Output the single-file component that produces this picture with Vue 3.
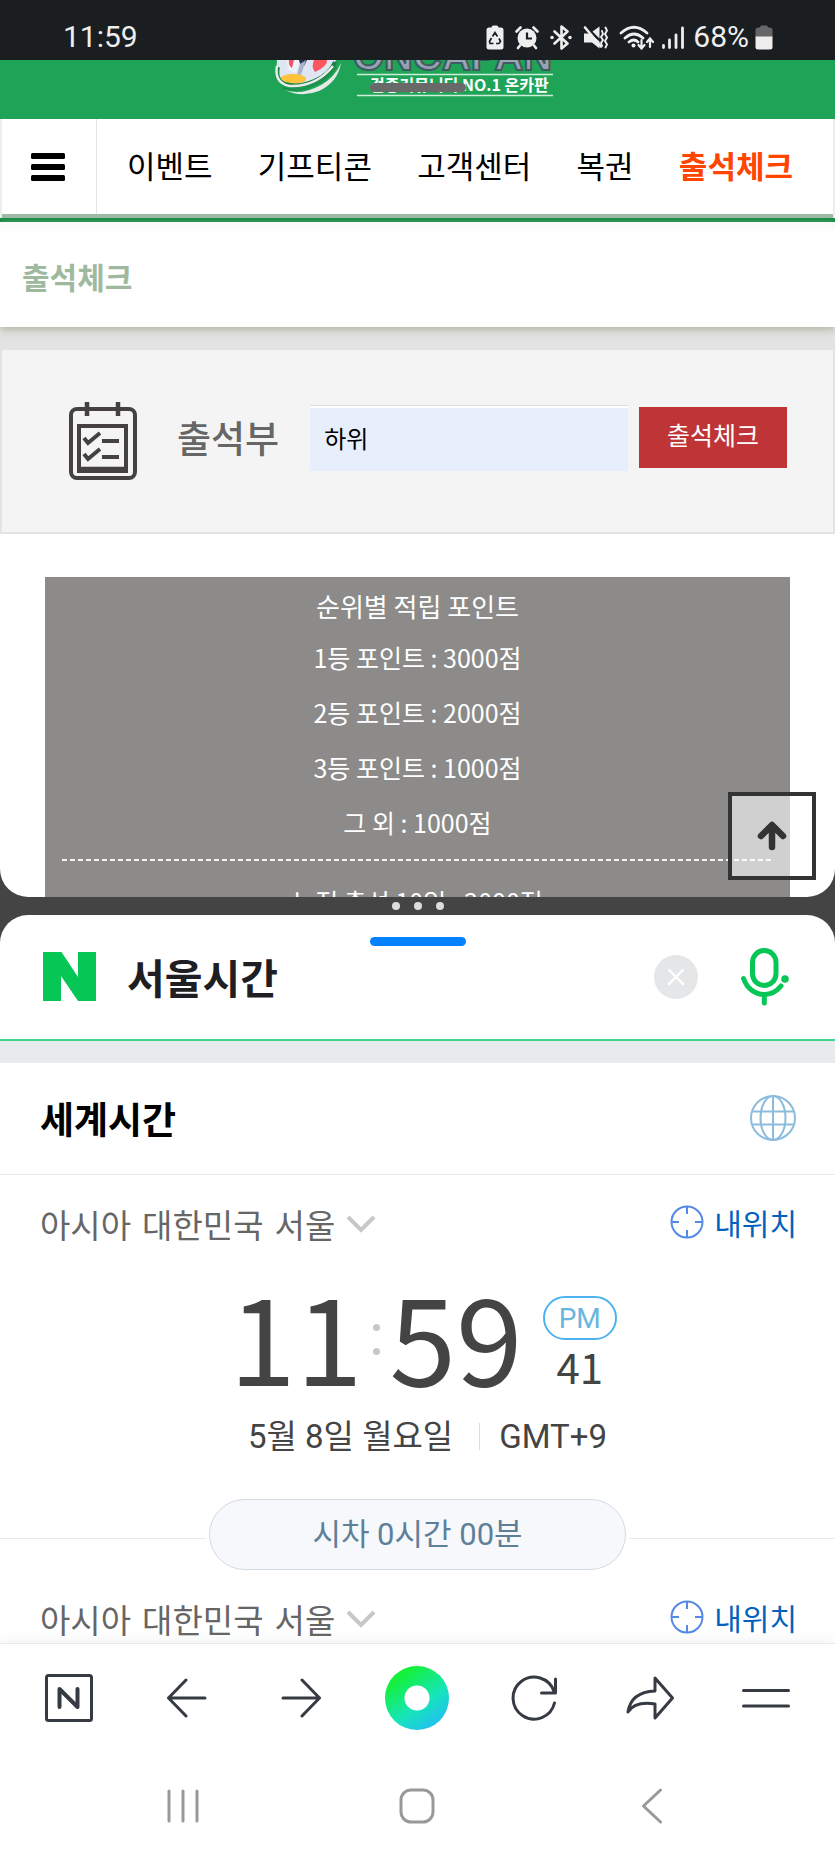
<script setup>
import { ref } from 'vue'

const menu = ['이벤트', '기프티콘', '고객센터', '복권', '출석체크']
const active = '출석체크'
const greeting = ref('하위')
const query = ref('서울시간')
const ranks = ['1등 포인트 : 3000점', '2등 포인트 : 2000점', '3등 포인트 : 1000점', '그 외 : 1000점']
const bonus = '누적 출석 10일 : 2000점'
const place = ['아시아', '대한민국', '서울']
</script>

<template>
  <div class="device">
    <header class="status">
      <span class="status-time">11:59</span>
      <div class="status-icons">
        <svg width="18" height="25" viewBox="0 0 18 25">
          <path d="M5.500 2.500q0-2 2-2h3q2 0 2 2h2.500q2.500 0 2.500 2.500v17q0 2.500-2.500 2.500h-12q-2.500 0-2.500-2.500v-17q0-2.500 2.500-2.500z" fill="#eee" />
          <path d="M6.500 11.500l2.500-4 2.500 4M13 13.500l1.500 3-1.500 2h-3M7.500 18.500h-3.500l-.5-2 2-3.500" fill="none" stroke="#1a1e21" stroke-width="1.700" />
        </svg>
        <svg width="24" height="25" viewBox="0 0 24 25">
          <circle cx="12" cy="13" r="9.500" fill="#eee" />
          <path d="M1.500 6.500l4-4M22.500 6.500l-4-4M5 20.500l-2 2.500M19 20.500l2 2.500" stroke="#eee" stroke-width="2.600" stroke-linecap="round" />
          <path d="M12 7.500v6h5" fill="none" stroke="#1a1e21" stroke-width="2.200" />
        </svg>
        <svg width="22" height="25" viewBox="0 0 22 25">
          <path d="M4.500 6.500l13 12-6 5v-22l6 5-13 12" fill="none" stroke="#eee" stroke-width="2.600" stroke-linejoin="round" stroke-linecap="round" />
          <circle cx="2" cy="12.500" r="1.800" fill="#eee" /><circle cx="20" cy="12.500" r="1.800" fill="#eee" />
        </svg>
        <svg width="25" height="25" viewBox="0 0 25 25">
          <path d="M1 8.500h6l9.500 8v7l-7.500-6h-8zM9.500 6.500l7-5v12z" fill="#eee" />
          <path d="M2 2.500l16 19" stroke="#eee" stroke-width="2.600" stroke-linecap="round" />
          <path d="M19 6l1 3-2 3 2 3-2 3 1 3M22.500 2.500l1.500 3-2 3.500 2 3.500-2 3.500 2 3.500-1.500 3" fill="none" stroke="#eee" stroke-width="1.900" stroke-linecap="round" />
        </svg>
        <div class="levels">
          <svg width="36" height="25" viewBox="0 0 36 25">
            <g fill="none" stroke="#eee" stroke-width="2.700" stroke-linecap="round">
              <path d="M2 8q13-11.500 26 0M6 13q9-8 18 0M10 17q5-4 9 0" />
              <path d="M22.500 15v8M19.500 20l3 3.500 3-3.500M31 22v-8M28 17l3-3.500 3 3.500" stroke-width="2.200" />
            </g>
            <circle cx="14.500" cy="20.500" r="2" fill="#eee" />
          </svg>
          <svg width="22" height="25" viewBox="0 0 22 25">
            <path d="M1.500 20.500v2M7.500 15v7.500M14 10v12.500M20.500 3v19.500" stroke="#eee" stroke-width="2.800" stroke-linecap="round" />
          </svg>
          <span class="charge">68%
            <svg width="18" height="25" viewBox="0 0 18 25">
              <path d="M.500 12v-7q0-2.500 3-2.500h1.500q0-2 2-2h4q2 0 2 2h1.500q3 0 3 2.500v7z" fill="#666" />
              <path d="M.500 11.500h17v10.500q0 2.500-2.500 2.500h-12q-2.500 0-2.500-2.500z" fill="#eee" />
            </svg>
          </span>
        </div>
      </div>
    </header>

    <main class="pane site">
      <div class="brand">
        <svg width="289" height="59" viewBox="0 0 289 59" role="img" aria-label="ONCAPAN">
          <defs>
            <linearGradient id="steel" x1="0" y1="0" x2="0" y2="1">
              <stop offset="0" stop-color="#b9c3cf" /><stop offset="1" stop-color="#8896a6" />
            </linearGradient>
          </defs>
          <path d="M4 0h59q-8 20-34 26-24 2-26-11z" fill="#dfe5f2" />
          <path d="M14 0h13l-4 13-8-3z" fill="#eef1f8" />
          <path d="M16 0h5l-2 8q-4-3-3-8z" fill="#ee5563" />
          <path d="M26 0h8l-3 6q-4 0-5-6z" fill="#26324f" />
          <path d="M33 0l-5 15h-4l3-11z" fill="#a9b4cc" />
          <path d="M41 0h13q1 6-12 12-4-5-1-12z" fill="#fb5560" />
          <ellipse cx="20" cy="19" rx="13" ry="5" fill="#fdc33d" />
          <path d="M5 7q-3 13 7 17 17 5 37-7 9-6 13-15" fill="none" stroke="#1c7f48" stroke-width="4" />
          <path d="M4 6q-3 17 13 20 26 1 43-20" fill="none" stroke="#e9ece9" stroke-width="2.500" />
          <path d="M12 30q16 6 36-5 14-8 20-22-3 19-22 28-18 7-34-1z" fill="#e6e9e6" />
          <path d="M10 28q18 5 37-6 10-6 16-15" fill="none" stroke="#1c8f4d" stroke-width="2" />
          <text x="80" y="10" class="logo-name">ONCAPAN</text>
          <path d="M84 14.500h196M84 35.500h196" stroke="#cfeeda" stroke-width="1.300" />
          <text x="97" y="31" class="logo-sub">검증커뮤니티 NO.1 온카판</text>
        </svg>
      </div>
      <nav class="menu">
        <button class="burger" type="button" aria-label="메뉴">
          <svg width="34" height="28" viewBox="0 0 34 28">
            <rect width="34" height="6" rx="1.500" /><rect y="11" width="34" height="6" rx="1.500" /><rect y="22" width="34" height="6" rx="1.500" />
          </svg>
        </button>
        <div class="links">
          <a v-for="m in menu" :key="m" href="#" :class="{ active: m === active }">{{ m }}</a>
        </div>
      </nav>
      <h1 class="page-title">출석체크</h1>
      <form class="attend" @submit.prevent>
        <svg width="68" height="80" viewBox="0 0 68 80" fill="none" stroke="#454143">
          <rect x="2" y="8" width="64" height="69" rx="6" stroke-width="4" />
          <rect x="10" y="25" width="47" height="45" stroke-width="4" />
          <path d="M10 68h47M18 1v14M49 1v14" stroke-width="4.500" />
          <path d="M15 37l4 5 12-10M33 40h17M15 53l4 5 12-10M33 56h17" stroke-width="4" />
        </svg>
        <label for="greeting">출석부</label>
        <input id="greeting" v-model="greeting" type="text">
        <button type="submit">출석체크</button>
      </form>
      <section class="points">
        <h2>순위별 적립 포인트</h2>
        <p v-for="r in ranks" :key="r">{{ r }}</p>
        <div class="dash"></div>
        <p>{{ bonus }}</p>
      </section>
      <button class="to-top" type="button" aria-label="위로">
        <svg width="30" height="30" viewBox="0 0 30 30">
          <path d="M15 26v-20M4 15l11-11 11 11" fill="none" stroke="#333" stroke-width="6.500" stroke-linecap="round" stroke-linejoin="round" />
        </svg>
      </button>
      <span class="grip"></span>
    </main>

    <div class="divider"><i></i><i></i><i></i></div>

    <section class="pane naver">
      <div class="results">
        <form class="search" @submit.prevent>
          <svg width="53" height="49" viewBox="0 0 53 49" role="img" aria-label="NAVER">
            <path d="M0 0h18.500l16.500 25v-25h18v49h-18l-17-25v25h-18z" fill="#06c755" />
          </svg>
          <input v-model="query" type="text" aria-label="검색어">
          <button type="button" aria-label="지우기">
            <svg width="44" height="44" viewBox="0 0 44 44">
              <circle cx="22" cy="22" r="22" fill="#e5e6e8" />
              <path d="M15 15l14 14M29 15l-14 14" stroke="#fff" stroke-width="2.400" stroke-linecap="round" />
            </svg>
          </button>
          <button type="button" aria-label="음성 검색">
            <svg width="48" height="58" viewBox="0 0 48 58" fill="none" stroke="#06c755" stroke-width="5" stroke-linecap="round">
              <rect x="11.500" y="2.500" width="23.500" height="35" rx="11.700" />
              <path d="M2.500 30.500c3.500 10 11.500 16 21 16 6.500 0 12-3 16.500-8.500M23.300 47v8" />
              <circle cx="44" cy="31" r="3.800" fill="#06c755" stroke="none" />
            </svg>
          </button>
        </form>
        <div class="section-head">
          <h2>세계시간</h2>
          <svg width="46" height="46" viewBox="0 0 46 46" fill="none" stroke="#8dbbdd" stroke-width="2">
            <circle cx="23" cy="23" r="22" /><ellipse cx="23" cy="23" rx="12.500" ry="22" />
            <path d="M23 1v44M3 16.500h40M3 29.500h40" />
          </svg>
        </div>
        <template v-for="n in 2" :key="n">
          <div class="place">
            <button class="city" type="button">
              <span v-for="p in place" :key="p">{{ p }}</span>
              <svg width="30" height="18" viewBox="0 0 30 18"><path d="M2 2l13 13 13-13" fill="none" stroke="#c5c7c9" stroke-width="4" /></svg>
            </button>
            <a class="mine" href="#">
              <svg width="34" height="34" viewBox="0 0 34 34" fill="none" stroke="#5489e6" stroke-width="2">
                <circle cx="17" cy="17" r="15.500" /><path d="M17 1v8M17 25v8M1 17h8M25 17h8" />
              </svg>내위치</a>
          </div>
          <template v-if="n === 1">
            <div class="clock">
              <span>11</span><span class="colon"><i></i><i></i></span><span>59</span>
              <div class="side"><b>PM</b><em>41</em></div>
            </div>
            <div class="date"><span>5월 8일 월요일</span><i></i><span>GMT+9</span></div>
            <div class="offset"><span>시차 0시간 00분</span></div>
          </template>
        </template>
      </div>

      <nav class="toolbar">
        <button type="button" aria-label="홈">
          <svg width="48" height="48" viewBox="0 0 48 48" stroke-width="3"><rect x="1.500" y="1.500" width="45" height="45" rx="2" /><path d="M14.500 33v-18l18 18v-18" stroke-width="4" /></svg>
        </button>
        <button type="button" aria-label="뒤로">
          <svg width="44" height="40" viewBox="-4 0 44 40" stroke-width="3"><path d="M38 20h-36M19 2l-17.500 18 17.500 18" /></svg>
        </button>
        <button type="button" aria-label="앞으로">
          <svg width="40" height="40" viewBox="0 0 40 40" stroke-width="3"><path d="M2 20h36M21 2l17.500 18-17.500 18" /></svg>
        </button>
        <button type="button" aria-label="그린닷"><span class="dot"></span></button>
        <button type="button" aria-label="새로고침">
          <svg width="46" height="46" viewBox="0 0 46 46" stroke-width="3"><path d="M43.500 28a21 21 0 1 1-.5-11.500M44.500 4v14h-14" /></svg>
        </button>
        <button type="button" aria-label="공유">
          <svg width="48" height="46" viewBox="0 0 48 46" stroke-width="3"><path d="M29 3l17.500 20-17.500 20v-14q-20-3-27 8 3-20 27-21z" /></svg>
        </button>
        <button type="button" aria-label="더보기">
          <svg width="48" height="20" viewBox="0 0 48 20" stroke-width="3"><path d="M1.500 2.500h45M1.500 18h45" /></svg>
        </button>
      </nav>
      <nav class="system">
        <button type="button" aria-label="최근 앱">
          <svg width="32" height="34" viewBox="0 0 32 34"><path d="M2 2v30M16 2v30M30 2v30" /></svg>
        </button>
        <button type="button" aria-label="홈 화면">
          <svg width="36" height="36" viewBox="0 0 36 36"><rect x="2" y="2" width="32" height="32" rx="10" /></svg>
        </button>
        <button type="button" aria-label="이전">
          <svg width="22" height="36" viewBox="0 0 22 36"><path d="M19.500 2l-17 16 17 16" /></svg>
        </button>
      </nav>
      <span class="grip blue"></span>
    </section>
  </div>
</template>

<style>
body { margin: 0; background: #444; }
</style>

<style scoped>
.device {
  display: flex;
  flex-direction: column;
  height: 100vh;
  background: #444;
  font-family: "Noto Sans CJK KR", "Noto Sans", sans-serif;
  color: #000;
}
* { box-sizing: border-box; }
svg { display: block; flex: none; }
h1, h2, p { margin: 0; }
a { color: inherit; text-decoration: none; }
button { border: 0; padding: 0; background: none; font: inherit; color: inherit; }
input { font: inherit; color: inherit; border: 0; outline: 0; min-width: 0; }

.status {
  flex: none;
  display: flex;
  justify-content: space-between;
  align-items: center;
  height: 60px;
  padding: 14px 62px 0 63px;
  background: #1a1e21;
  color: #eee;
  font: 30px/44px Roboto, sans-serif;
}
.status-icons { display: flex; align-items: center; gap: 11px; }
.levels { display: flex; align-items: center; gap: 7px; }
.charge { display: flex; align-items: center; gap: 6px; margin-left: 2px; }

.pane { position: relative; overflow: hidden; min-height: 0; background: #fff; }
.site { flex: 8 1 0; border-radius: 0 0 28px 28px; }
.naver { flex: 9 1 0; display: flex; flex-direction: column; border-radius: 28px 28px 0 0; }

.brand { display: flex; justify-content: center; background: #1fa357; }
.logo-name { font: bold 40px "Liberation Sans", sans-serif; fill: url(#steel); stroke: #3f5a60; stroke-width: 2px; }
.logo-sub { font: bold 16px "Noto Sans CJK KR", sans-serif; fill: #fff; }
.grip {
  position: absolute;
  top: 23px;
  left: 50%;
  width: 96px;
  height: 9px;
  margin-left: -48px;
  border-radius: 5px;
  background: #696969;
}
.grip.blue { top: 22px; background: #0381fe; }

.menu {
  display: flex;
  height: 103px;
  border: solid #128a43;
  border-width: 0 0 4px;
  box-shadow: inset 2px 0 #eee, inset -2px 0 #eee, inset 0 -4px #9fb9a8;
}
.burger {
  display: flex;
  align-items: center;
  justify-content: center;
  width: 97px;
  margin-bottom: 4px;
  border-right: 1px solid #e4e4e4;
}
.links {
  flex: 1;
  display: flex;
  justify-content: space-between;
  align-items: center;
  padding: 0 42px 8px 30px;
  font-size: 31px;
}
.links .active { color: #ff4500; font-weight: bold; }

.page-title {
  position: relative;
  height: 105px;
  padding-left: 22px;
  background: linear-gradient(#f8f8f8, #fff 12px);
  box-shadow: 0 3px 8px #b4b4a4;
  color: #9fb99f;
  font-size: 30px;
  line-height: 108px;
}
.attend {
  display: flex;
  align-items: center;
  height: 207px;
  padding: 0 46px 0 67px;
  border: solid #e3e3e3;
  border-width: 23px 2px 2px;
  background: #f4f4f4;
}
.attend label {
  margin: 0 31px 8px 40px;
  color: #666;
  font-size: 37px;
  font-weight: 500;
}
.attend input {
  flex: 1;
  height: 66px;
  margin: 0 11px 6px 0;
  padding: 0 14px 2px;
  border-top: 1px solid #ddd;
  background: linear-gradient(#fff 2px, #e7effd 2px);
  font-size: 24px;
}
.attend button {
  width: 148px;
  height: 61px;
  margin-bottom: 8px;
  padding-bottom: 6px;
  background: #bf3537;
  color: #fff;
  font-size: 25px;
}
.points {
  margin: 43px 45px 0;
  padding: 9px 17px 0;
  background: #8c8b89;
  color: #fff;
  font-size: 25px;
  line-height: 55px;
  text-align: center;
}
.points h2 { margin-bottom: 4px; font-size: 26px; font-weight: 400; line-height: 40px; }
.dash {
  height: 2px;
  margin: 9px 0 13px;
  background: repeating-linear-gradient(90deg, #f4f4f4 0 5px, transparent 5px 8px);
}
.to-top {
  position: absolute;
  right: 19px;
  bottom: 17px;
  display: flex;
  align-items: center;
  justify-content: center;
  width: 88px;
  height: 88px;
  border: 4px solid #333;
  background: rgba(255, 255, 255, .6);
}

.divider { flex: none; display: flex; align-items: center; justify-content: center; gap: 14px; height: 18px; }
.divider i { width: 8px; height: 8px; border-radius: 50%; background: #ddd; }

.results { flex: 1; min-height: 0; overflow: hidden; }
.search {
  display: flex;
  align-items: center;
  height: 126px;
  padding: 0 46px 0 43px;
  border-bottom: 2px solid #42d48b;
}
.search input { flex: 1; margin: 0 31px; padding: 0 0 2px; color: #1e1e23; font-size: 41px; font-weight: bold; }
.search button + button { margin-left: 43px; }
.section-head {
  display: flex;
  align-items: center;
  justify-content: space-between;
  height: 134px;
  padding: 0 39px 0 40px;
  border-top: 22px solid #e7ebee;
  border-bottom: 1px solid #e6e8ec;
}
.section-head h2 { font-size: 37px; }
.place {
  display: flex;
  align-items: center;
  justify-content: space-between;
  height: 102px;
  padding: 0 38px 4px 40px;
}
.city { display: flex; align-items: center; gap: 11px; color: #666; font-size: 33px; }
.mine { display: flex; align-items: center; gap: 10px; margin-bottom: 3px; color: #0062bd; font-size: 30px; }

.clock {
  display: flex;
  justify-content: center;
  padding-left: 11px;
  color: #444;
  font-size: 120px;
  line-height: 114px;
}
.colon { display: flex; flex-direction: column; align-items: center; justify-content: center; gap: 17px; width: 27px; padding-top: 12px; }
.colon i { width: 7px; height: 7px; border-radius: 50%; background: #c8c8c8; }
.side { display: flex; flex-direction: column; align-items: center; margin-left: 20px; padding-top: 19px; }
.side b {
  width: 74px;
  height: 44px;
  border: 2px solid #4db3f0;
  border-radius: 22px;
  color: #68b6e0;
  font: 28px/42px Roboto, sans-serif;
  text-align: center;
}
.side em { height: 50px; font-size: 42px; font-style: normal; line-height: 52px; }
.date {
  display: flex;
  align-items: center;
  justify-content: center;
  gap: 19px;
  margin-top: 22px;
  padding-left: 20px;
  color: #444;
  font: 33px/48px Roboto, "Noto Sans CJK KR", sans-serif;
}
.date i { width: 1px; height: 27px; margin-left: 7px; background: #ddd; }
.offset { display: flex; align-items: center; gap: 3px; margin-top: 38px; }
.offset::before, .offset::after { content: ""; flex: 1; height: 1px; margin-top: 8px; background: #e8e8e8; }
.offset span {
  width: 50%;
  height: 71px;
  border: 1px solid #d3dbe1;
  border-radius: 36px;
  background: #f6f8fb;
  color: #5f7f99;
  font: 31px/69px Roboto, "Noto Sans CJK KR", sans-serif;
  text-align: center;
}

.toolbar, .system { position: relative; flex: none; display: flex; background: #fff; }
.toolbar { height: 110px; padding: 0 11px 2px; border-top: 1px solid #e6eaed; box-shadow: 0 -4px 10px rgba(120, 130, 150, .08); }
.system { height: 103px; padding: 2px 66px 0; }
.toolbar button, .system button { flex: 1; display: flex; align-items: center; justify-content: center; }
.toolbar svg { fill: none; stroke: #363a42; stroke-linecap: round; stroke-linejoin: round; }
.system svg { fill: none; stroke: #999; stroke-width: 3; stroke-linecap: round; stroke-linejoin: round; }
.dot {
  width: 64px;
  height: 64px;
  border-radius: 50%;
  background: radial-gradient(circle, #fff 12px, transparent 13px), linear-gradient(145deg, #14f03c 20%, #16e5b8 58%, #23b8ff 95%);
}
</style>
